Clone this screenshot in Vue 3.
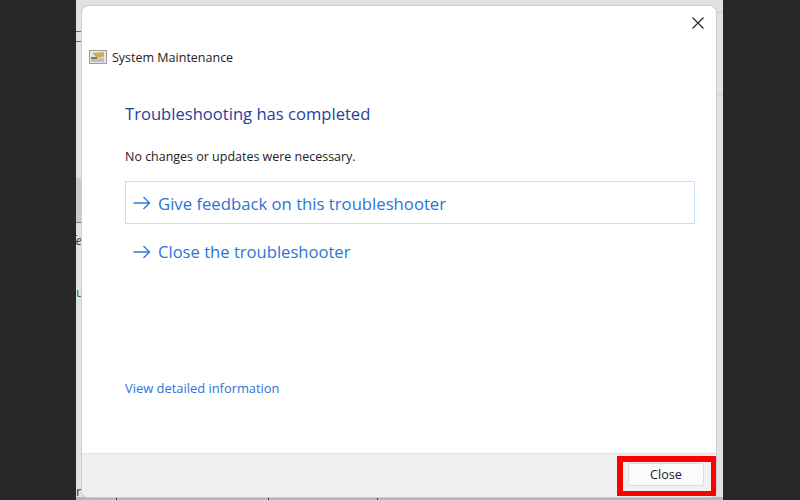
<script setup>
const links = [
  { text: 'Give feedback on this troubleshooter', boxed: true },
  { text: 'Close the troubleshooter', boxed: false }
]
</script>

<template>
  <div class="page">
    <div class="backdrop">
      <span class="frag f2">fe</span>
      <span class="frag f3">u</span>
      <span class="frag f4">r</span>
      <i class="rule s1"></i>
      <i class="rule s2"></i>
      <i class="rule s3"></i>
      <i class="rule s4"></i>
      <i class="rule s5"></i>
      <i class="shade"></i>
      <i class="floor"></i>
      <i class="tick t1"></i>
      <i class="tick t2"></i>
      <i class="tick t3"></i>
      <section class="dialog">
        <button class="x" aria-label="Dismiss">
          <svg width="14" height="14" viewBox="0 0 14 14"><path d="M1.5 1.5 12.5 12.5M12.5 1.5 1.5 12.5" stroke="#222" stroke-width="1.1" fill="none"/></svg>
        </button>
        <div class="body">
          <div class="title-row">
            <svg class="icon" width="18" height="14" viewBox="0 0 18 14">
              <rect x="0.5" y="0.5" width="17" height="13" fill="#e8e8e6" stroke="#9c9c98"/>
              <path d="M3 3 15 2V7L8 8Z" fill="#cfae55"/>
              <path d="M2 9 15 8v4H2z" fill="#bcbdbb"/>
              <path d="M2 7h6v2H2z" fill="#77776f"/>
            </svg>
            <span>System Maintenance</span>
          </div>
          <h1>Troubleshooting has completed</h1>
          <p class="msg">No changes or updates were necessary.</p>
          <a v-for="l in links" :key="l.text" class="link" :class="{ boxed: l.boxed }">
            <svg width="18" height="14" viewBox="0 0 18 14"><path d="M0.5 7H16.5M10.5 1 16.5 7 10.5 13" stroke="#2b7cd8" stroke-width="1.4" fill="none"/></svg>
            <span>{{ l.text }}</span>
          </a>
          <a class="details">View detailed information</a>
        </div>
        <footer>
          <button class="close">Close</button>
        </footer>
        <div class="highlight"></div>
      </section>
    </div>
  </div>
</template>

<style>
html, body { margin: 0; background: #282828; }
</style>

<style scoped>
.page {
  width: 800px;
  height: 500px;
  overflow: hidden;
  background: #282828;
  display: flex;
  justify-content: center;
  font-family: "Open Sans", "Noto Sans", sans-serif;
}
.backdrop {
  position: relative;
  margin-left: -1px;
  width: 647px;
  height: 500px;
  background: #e2e2e2;
}
.frag { position: absolute; left: 0; color: #333; font-size: 13px; line-height: 14px; }
.f2 { top: 233px; width: 6px; overflow: hidden; font-style: italic; direction: rtl; }
.f3 { top: 285px; width: 6px; overflow: hidden; color: #2a5d8f; }
.f4 { top: 484px; width: 6px; overflow: hidden; color: #5a2a3a; }
.rule { position: absolute; height: 1px; }
.s1 { left: 0; width: 6px; top: 31px; background: #6a6a6a; }
.s2 { left: 0; width: 6px; top: 41px; background: #6a6a6a; }
.s3 { left: 0; width: 6px; top: 222px; background: #777; }
.s4 { right: 0; width: 8px; top: 12px; background: #c6c6c6; }
.s5 { right: 0; width: 8px; top: 94px; background: #cacaca; }
.shade { position: absolute; left: 0; width: 6px; top: 178px; height: 44px; background: #cbcbcb; }
.floor { position: absolute; left: 0; right: 0; top: 497px; height: 3px; background: #b6b6b9; }
.tick { position: absolute; top: 497px; width: 1px; height: 3px; background: #333; }
.t1 { left: 40px; }
.t2 { left: 192px; }
.t3 { left: 301px; }
.dialog {
  position: absolute;
  left: 6px;
  top: 6px;
  width: 634px;
  height: 491px;
  box-sizing: border-box;
  background: #fff;
  border-radius: 7px;
  box-shadow: 0 0 0 1px #cfcfcf;
  display: flex;
  flex-direction: column;
  color: #1c1c1c;
}
.x {
  position: absolute;
  top: 10px;
  right: 11px;
  padding: 0;
  border: 0;
  background: none;
  line-height: 0;
}
.body {
  flex: 1;
  padding: 42px 21px 0 7px;
  display: flex;
  flex-direction: column;
}
.title-row {
  display: flex;
  align-items: center;
  gap: 5px;
  height: 18px;
  font-size: 12.5px;
  color: #222;
}
.icon { flex: none; }
h1 {
  margin: 36px 0 0 36px;
  font-size: 16.6px;
  line-height: 24px;
  font-weight: 400;
  color: #1f3f9c;
}
.msg {
  margin: 22px 0 0 36px;
  font-size: 12.47px;
  line-height: 18px;
  color: #222;
}
.link {
  margin: 15px 0 0 36px;
  height: 43px;
  box-sizing: border-box;
  padding: 1px 0 0 7px;
  display: flex;
  align-items: center;
  gap: 7px;
  font-size: 16.7px;
  color: #2b74d8;
  border: 1px solid transparent;
}
.link + .link { margin-top: 6px; padding-top: 0; font-size: 16.6px; }
.boxed { border-color: #c4e0f8; }
.details {
  margin: auto 0 56px 36px;
  font-size: 12.9px;
  line-height: 18px;
  color: #2b74d8;
}
footer {
  height: 44px;
  flex: none;
  box-sizing: border-box;
  background: #f0eff1;
  border-top: 1px solid #e2e2e2;
  border-radius: 0 0 7px 7px;
  display: flex;
  justify-content: flex-end;
  align-items: flex-start;
  padding: 9px 12px 0 0;
}
.close {
  width: 76px;
  height: 23px;
  box-sizing: border-box;
  background: #fbfbfb;
  border: 1px solid #dcdcdc;
  border-radius: 3px;
  font: 12.6px "Open Sans", "Noto Sans", sans-serif;
  color: #222;
  padding: 0;
}
.highlight {
  position: absolute;
  left: 535px;
  top: 450px;
  width: 99px;
  height: 40px;
  box-sizing: border-box;
  border-style: solid;
  border-color: #f00;
  border-width: 6px 5px 5px 6px;
}
</style>
